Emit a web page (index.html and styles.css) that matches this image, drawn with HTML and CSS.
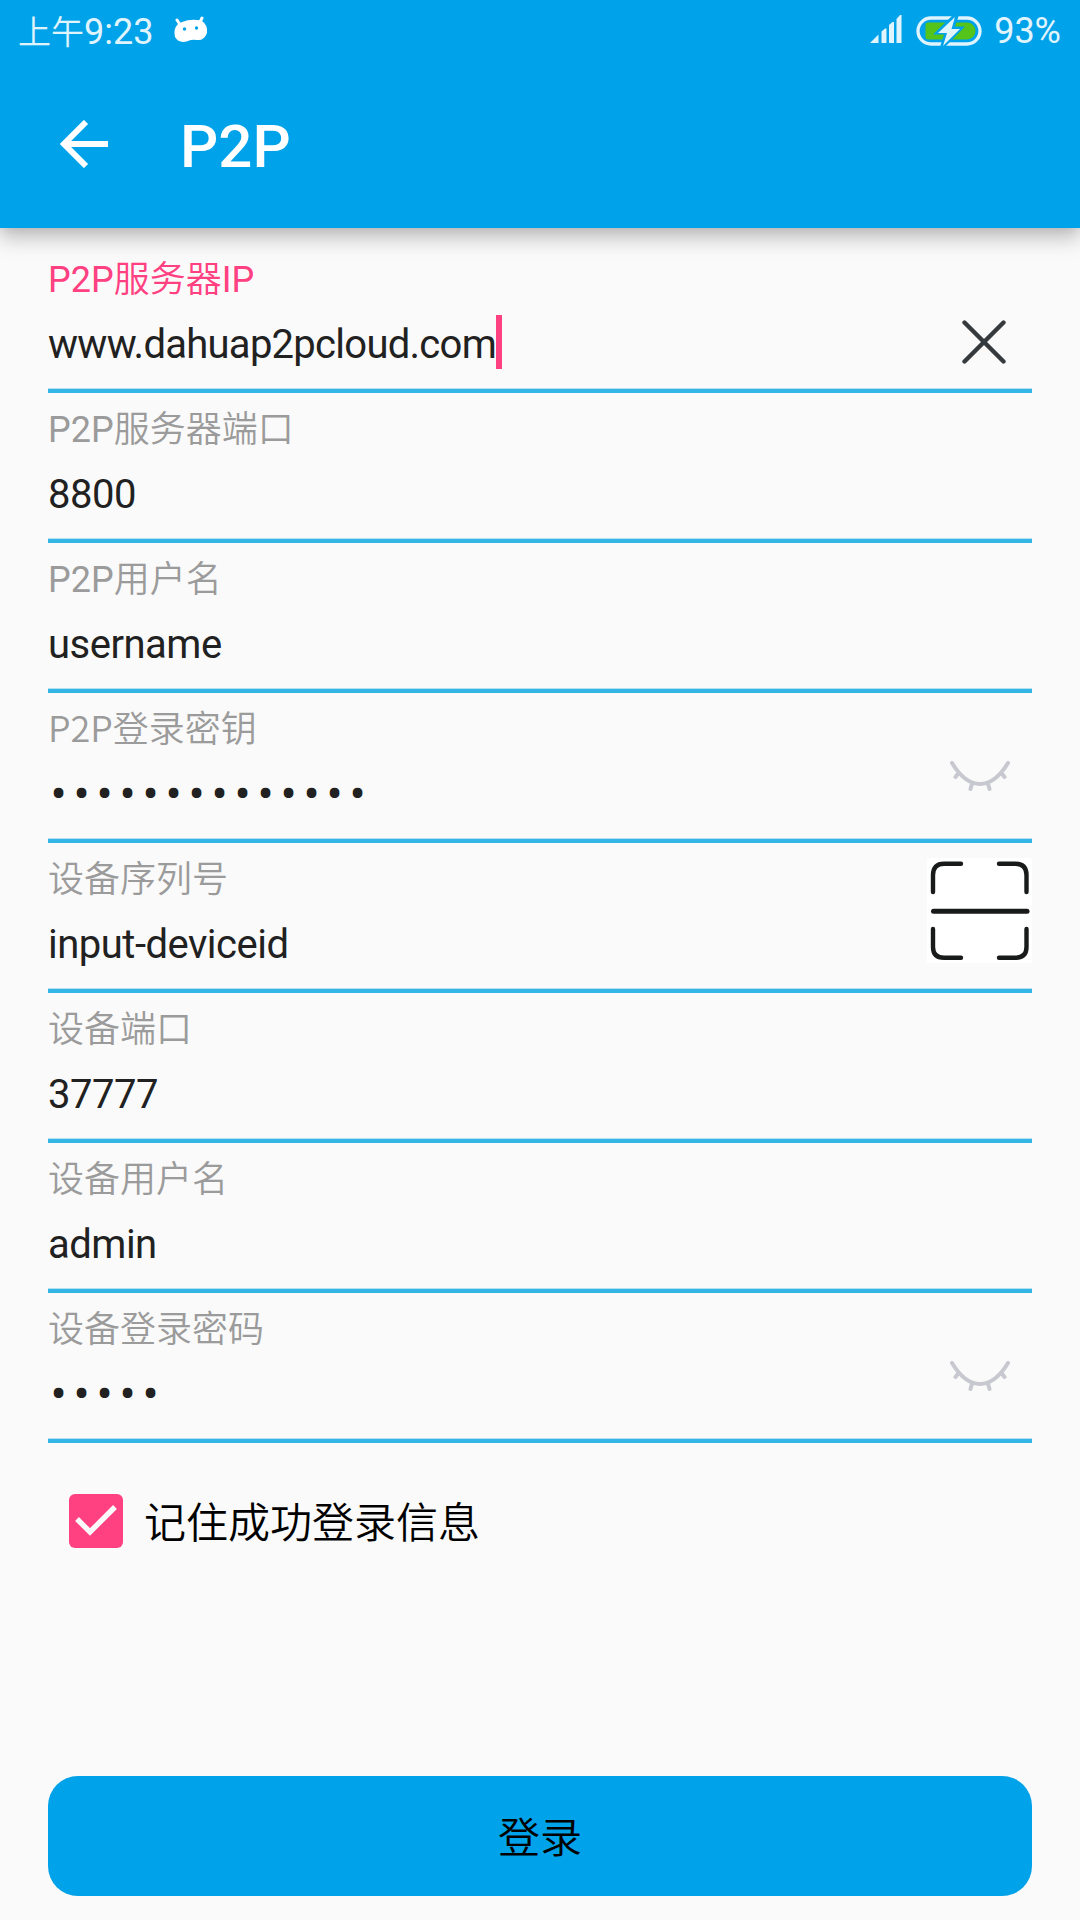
FILE: index.html
```html
<!DOCTYPE html>
<html lang="zh-CN">
<head>
<meta charset="utf-8">
<title>P2P</title>
<link rel="stylesheet" href="styles.css">
</head>
<body>
<header class="header">
  <div class="status">
    <div class="status-left">
      <span class="time"><span class="time-cjk">上午</span>9:23</span>
      <svg class="droid" width="36" height="28" viewBox="0 0 36 28">
        <path d="M4 4l4 6M29 2l-3 6" stroke="#fff" stroke-width="3" stroke-linecap="round"/>
        <path d="M9 6Q19 2 29 5Q35 9 34 17Q31 25 24 24Q19 23 15 25Q6 28 2 21Q0 13 5 8Z" fill="#fff"/>
        <circle cx="11.500" cy="13" r="1.700" fill="#00a2e9"/><circle cx="23.500" cy="12" r="1.700" fill="#00a2e9"/>
      </svg>
    </div>
    <div class="status-right">
      <svg class="signal" width="32" height="29" viewBox="0 0 32 29" fill="#e0f4fd">
        <path d="M0 28L8.500 19.500V28Z"/>
        <path d="M11.500 28V16.500l3.500-3h1.500V28Z"/><path d="M19 28V10l3.500-3H24V28Z"/><path d="M26.500 28V4L30 0h1.500V28Z"/>
      </svg>
      <svg class="battery" width="68" height="32" viewBox="0 0 68 32">
        <rect x="2" y="3" width="62" height="26" rx="13" fill="none" stroke="#e0f4fd" stroke-width="3.300"/>
        <path d="M12 7.500H51a8.500 8.500 0 0 1 0 17H12a2.500 2.500 0 0 1-2.500-2.500V10A2.500 2.500 0 0 1 12 7.500Z" fill="#54c41a"/>
        <path d="M37 0L17 19.500H28L24 32H29L49 11.500H39L43 0Z" fill="#00a2e9"/>
        <path d="M39 2L22 18H31L27 31L44 14H35.500Z" fill="#e0f4fd"/>
      </svg>
      <span class="percent">93%</span>
    </div>
  </div>
  <div class="toolbar">
    <svg class="back" width="50" height="48" viewBox="0 0 50 48" fill="none" stroke="#fff" stroke-width="6">
      <path d="M26 2L4 24L26 46M3.500 24H48"/>
    </svg>
    <h1 class="title">P2P</h1>
  </div>
</header>
<main class="form">
  <div class="field focused">
    <div class="text"><label class="label">P2P服务器IP</label><div class="value url">www.dahuap2pcloud.com<i class="caret"></i></div></div>
    <svg class="clear" width="44" height="44" viewBox="0 0 44 44" stroke="#373a3c" stroke-width="4.400" stroke-linecap="round"><path d="M2.500 2.500L41.500 41.500M41.500 2.500L2.500 41.500"/></svg>
  </div>
  <div class="field">
    <div class="text"><label class="label">P2P服务器端口</label><div class="value">8800</div></div>
  </div>
  <div class="field">
    <div class="text"><label class="label">P2P用户名</label><div class="value">username</div></div>
  </div>
  <div class="field">
    <div class="text"><label class="label noto">P2P登录密钥</label><div class="value dots">••••••••••••••</div></div>
    <svg class="eye" width="60" height="32" viewBox="0 0 60 32" fill="none" stroke="#c8c8d1" stroke-width="4" stroke-linecap="round"><path d="M2 3C19 31 41 31 58 3M8.500 13L5.500 17M51.500 13L54.500 17M22 23.500L20.500 29M38 23.500L39.500 29"/></svg>
  </div>
  <div class="field">
    <div class="text"><label class="label">设备序列号</label><div class="value">input-deviceid</div></div>
    <svg class="scan" width="105" height="105" viewBox="0 0 105 105" fill="none" stroke="#191a1a" stroke-width="4.400" stroke-linecap="round"><rect width="105" height="105" fill="#fff" stroke="none"/><path d="M6 34V17Q6 5.800 17 5.800H34M72 5.800H88Q99.500 5.800 99.500 17V34M6 71V89Q6 99.800 17 99.800H34M72 99.800H88Q99.500 99.800 99.500 89V71"/><path d="M6.500 53.300H100" stroke-width="5"/></svg>
  </div>
  <div class="field">
    <div class="text"><label class="label">设备端口</label><div class="value">37777</div></div>
  </div>
  <div class="field">
    <div class="text"><label class="label">设备用户名</label><div class="value">admin</div></div>
  </div>
  <div class="field">
    <div class="text"><label class="label">设备登录密码</label><div class="value dots">•••••</div></div>
    <svg class="eye" width="60" height="32" viewBox="0 0 60 32" fill="none" stroke="#c8c8d1" stroke-width="4" stroke-linecap="round"><path d="M2 3C19 31 41 31 58 3M8.500 13L5.500 17M51.500 13L54.500 17M22 23.500L20.500 29M38 23.500L39.500 29"/></svg>
  </div>
  <div class="remember">
    <svg width="54" height="54" viewBox="0 0 54 54"><rect width="54" height="54" rx="6" fill="#ff4081"/><path d="M8 25L21 38L46 13" fill="none" stroke="#fafafa" stroke-width="5.400"/></svg>
    <span class="remember-text">记住成功登录信息</span>
  </div>
  <button class="login">登录</button>
</main>
</body>
</html>
```
FILE: styles.css
```css
* { box-sizing: border-box; }
body {
  margin: 0;
  height: 1920px;
  overflow: hidden;
  display: flex;
  flex-direction: column;
  background: #fafafa;
  font-family: Roboto, "Noto Sans CJK SC DemiLight", "Noto Sans CJK SC", sans-serif;
  color: #212121;
}
.header {
  height: 228px;
  flex: none;
  background: #00a2e9;
  box-shadow: 0 10px 20px rgba(0, 0, 0, .24), 0 2px 10px rgba(0, 0, 0, .08);
}
.status {
  height: 60px;
  padding: 0 19px 0 18px;
  display: flex;
  justify-content: space-between;
  color: #e0f4fd;
  font-size: 36px;
  line-height: 64px;
}
.status-left, .status-right { display: flex; }
.time-cjk { font-size: 33px; }
.droid { margin: 16px 0 0 20px; }
.signal { margin: 15px 14px 0 0; }
.battery { margin: 15px 10px 0 0; }
.percent { line-height: 62px; }
.toolbar { display: flex; padding-left: 60px; }
.back { margin-top: 60px; }
.title {
  margin: 52px 0 0 70px;
  color: #fff;
  font-size: 60px;
  font-weight: 500;
  line-height: 70px;
}
.form { padding: 15px 48px 0; display: flex; flex-direction: column; }
.field {
  height: 150px;
  display: flex;
  justify-content: space-between;
  background: linear-gradient(#b5e0f2 0 1px, #33b5e5 1px 5px) 0 145px / 100% 5px no-repeat;
}
.label {
  display: block;
  height: 60px;
  padding-top: 10px;
  color: #9b9b9b;
  font-size: 36px;
  line-height: 54px;
}
.noto { padding-top: 6px; font-family: "Noto Sans CJK SC DemiLight", "Noto Sans CJK SC", sans-serif; }
.focused .label { color: #ff4081; }
.value {
  height: 54px;
  margin-top: 15px;
  display: flex;
  font-size: 40px;
  line-height: 54px;
  letter-spacing: -.5px;
}
.url { letter-spacing: -.73px; }
.caret { width: 6px; height: 54px; margin-top: -3px; background: #ff4081; }
.dots { padding-left: 2.500px; letter-spacing: 6.800px; font-size: 48px; }
.clear { margin: 77px 26px 0 0; }
.eye { margin: 67px 22px 0 0; }
.scan { margin-top: 15px; }
.remember {
  margin: 51px 0 0 21px;
  height: 54px;
  display: flex;
  align-items: center;
  gap: 21px;
  color: #000;
  font-size: 42px;
}
.remember-text { margin-top: -4px; }
.login {
  margin-top: 228px;
  height: 120px;
  padding: 0 0 4px;
  border: 0;
  border-radius: 30px;
  background: #00a2e9;
  color: #000;
  font: 400 42px Roboto, "Noto Sans CJK SC DemiLight", "Noto Sans CJK SC", sans-serif;
}
```
